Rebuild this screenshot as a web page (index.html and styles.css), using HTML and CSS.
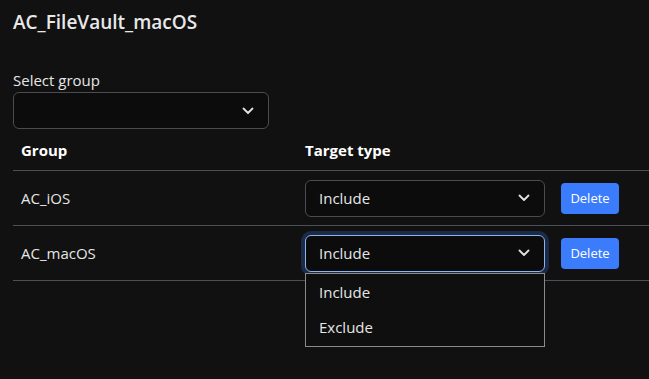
FILE: index.html
```html
<!DOCTYPE html>
<html lang="en">
<head>
<meta charset="utf-8">
<title>AC_FileVault_macOS</title>
<link rel="stylesheet" href="styles.css">
</head>
<body>
<main class="page">
  <h1 class="title">AC_FileVault_macOS</h1>
  <div class="field">
    <label class="label">Select group</label>
    <div class="select select-group">
      <span class="select-value"></span>
      <svg class="chev" width="12" height="8" viewBox="0 0 12 8"><path d="M1.5 1.5 L6 6 L10.5 1.5" fill="none" stroke="#dee2e6" stroke-width="1.8" stroke-linecap="round" stroke-linejoin="round"/></svg>
    </div>
  </div>
  <table class="table">
    <thead>
      <tr><th class="col-group">Group</th><th colspan="2">Target type</th></tr>
    </thead>
    <tbody>
      <tr>
        <td class="col-group">AC_iOS</td>
        <td class="col-type">
          <div class="select select-type">
            <span class="select-value">Include</span>
            <svg class="chev" width="12" height="8" viewBox="0 0 12 8"><path d="M1.5 1.5 L6 6 L10.5 1.5" fill="none" stroke="#dee2e6" stroke-width="1.8" stroke-linecap="round" stroke-linejoin="round"/></svg>
          </div>
        </td>
        <td class="col-action"><button class="btn">Delete</button></td>
      </tr>
      <tr>
        <td class="col-group">AC_macOS</td>
        <td class="col-type">
          <div class="select select-type focused">
            <span class="select-value">Include</span>
            <svg class="chev" width="12" height="8" viewBox="0 0 12 8"><path d="M1.5 1.5 L6 6 L10.5 1.5" fill="none" stroke="#dee2e6" stroke-width="1.8" stroke-linecap="round" stroke-linejoin="round"/></svg>
            <ul class="menu">
              <li class="menu-item">Include</li>
              <li class="menu-item">Exclude</li>
            </ul>
          </div>
        </td>
        <td class="col-action"><button class="btn">Delete</button></td>
      </tr>
    </tbody>
  </table>
</main>
</body>
</html>
```

FILE: styles.css
```css
html, body {
  margin: 0;
  padding: 0;
  min-height: 100%;
  background: #111111;
  color: #e6e6e6;
  font-family: "Open Sans", "Noto Sans", sans-serif;
}

.page {
  box-sizing: border-box;
  min-height: 379px;
  padding: 10px 0 0 13px;
}

.title {
  margin: 0;
  font-size: 19px;
  line-height: 24px;
  font-weight: 600;
  color: #e8e8e8;
}

.field {
  margin-top: 34px;
  width: 256px;
}

.label {
  display: block;
  font-size: 15px;
  line-height: 24px;
  color: #e6e6e6;
}

.select {
  position: relative;
  box-sizing: border-box;
  height: 37px;
  border: 1px solid #494c50;
  border-radius: 6px;
  background: #0c0c0c;
  display: flex;
  align-items: center;
  padding: 0 14px 0 13px;
  font-size: 15px;
  color: #e6e6e6;
}

.select-value {
  flex: 1;
}

.chev {
  display: block;
}

.select-group {
  width: 256px;
}

.select-type {
  width: 240px;
}

.select.focused {
  border-color: #8fb3ee;
  box-shadow: 0 0 0 4px #1a2a47;
}

.menu {
  position: absolute;
  left: -1px;
  top: 37px;
  width: 240px;
  box-sizing: border-box;
  margin: 0;
  padding: 1px 0;
  list-style: none;
  background: #0f0f0f;
  border: 1px solid #8a8a8a;
  z-index: 2;
}

.menu-item {
  height: 35px;
  line-height: 35px;
  padding-left: 13px;
  font-size: 15px;
  color: #e6e6e6;
}

.table {
  width: 100%;
  border-collapse: collapse;
  margin-top: 1px;
}

.table th {
  text-align: left;
  font-size: 15px;
  font-weight: 700;
  color: #ffffff;
  height: 40px;
  padding: 0 8px;
  border-bottom: 1px solid #4c5055;
}

.table td {
  padding: 8px;
  height: 38px;
  font-size: 15px;
  color: #e6e6e6;
  border-bottom: 1px solid #4c5055;
  vertical-align: middle;
}

.col-group {
  width: 268px;
}

.col-type {
  width: 240px;
}

.col-action {
  padding-left: 8px;
}

.btn {
  display: block;
  height: 31px;
  width: 58px;
  border: none;
  border-radius: 4px;
  background: #3b7cfd;
  color: #ffffff;
  font-family: inherit;
  font-size: 13px;
  padding: 0;
}
```
